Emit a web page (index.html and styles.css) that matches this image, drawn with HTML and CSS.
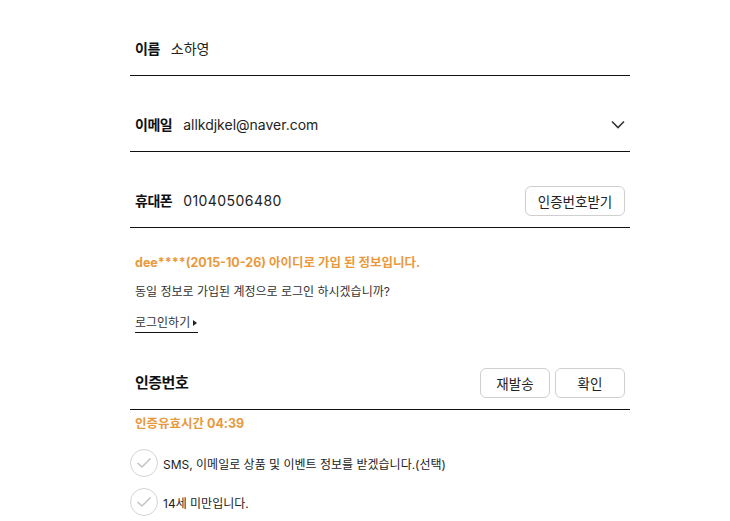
FILE: index.html
```html
<!DOCTYPE html>
<html lang="ko">
<head>
<meta charset="utf-8">
<link rel="stylesheet" href="styles.css">
</head>
<body>
<main class="form">
  <div class="row">
    <span class="label">이름</span>
    <span class="value">소하영</span>
  </div>
  <div class="row">
    <span class="label">이메일</span>
    <span class="value">allkdjkel@naver.com</span>
    <svg class="chev" width="14" height="9" viewBox="0 0 14 9"><path d="M1 1.5 L7 7.5 L13 1.5" fill="none" stroke="#333" stroke-width="1.6"/></svg>
  </div>
  <div class="row">
    <span class="label">휴대폰</span>
    <span class="value num">01040506480</span>
    <button class="btn btn-wide">인증번호받기</button>
  </div>
  <div class="info">
    <p class="warn">dee****(2015-10-26) 아이디로 가입 된 정보입니다.</p>
    <p class="ask">동일 정보로 가입된 계정으로 로그인 하시겠습니까?</p>
    <a class="login">로그인하기<span class="tri"></span></a>
  </div>
  <div class="row">
    <span class="label big">인증번호</span>
    <div class="btns">
      <button class="btn btn-mid">재발송</button>
      <button class="btn btn-mid">확인</button>
    </div>
  </div>
  <p class="timer">인증유효시간 04:39</p>
  <ul class="checks">
    <li><span class="circle"><svg width="16" height="12" viewBox="0 0 16 12"><path d="M1.5 6 L6 10 L14.5 1.5" fill="none" stroke="#c4c4c4" stroke-width="1.6"/></svg></span>SMS, 이메일로 상품 및 이벤트 정보를 받겠습니다.(선택)</li>
    <li><span class="circle"><svg width="16" height="12" viewBox="0 0 16 12"><path d="M1.5 6 L6 10 L14.5 1.5" fill="none" stroke="#c4c4c4" stroke-width="1.6"/></svg></span>14세 미만입니다.</li>
  </ul>
</main>
</body>
</html>
```
FILE: styles.css
```css
* { box-sizing: border-box; }
html, body { margin: 0; padding: 0; background: #fff; }
body {
  font-family: Inter, "Noto Sans CJK KR", sans-serif;
  color: #222;
}
.form {
  width: 500px;
  margin-left: 130px;
}
.row {
  height: 76px;
  border-bottom: 1px solid #111;
  display: flex;
  align-items: flex-end;
  padding: 0 5px 11px 5px;
}
.row > .label, .row > .value { line-height: 30px; }
.label {
  font-weight: 700;
  font-size: 14px;
  color: #111;
  letter-spacing: -0.5px;
  margin-right: 11px;
}
.label.big { font-size: 15px; }
.value {
  font-size: 14px;
  color: #222;
}
.value.num { letter-spacing: 0.45px; }
.chev { margin-left: auto; align-self: flex-end; margin-bottom: 11px; }
.btn {
  height: 30px;
  background: #fff;
  border: 1px solid #cfcfcf;
  border-radius: 6px;
  font-family: "Noto Sans CJK KR", sans-serif;
  font-size: 13.5px;
  color: #222;
  padding: 0;
}
.btn-wide { width: 100px; margin-left: auto; }
.btns { margin-left: auto; display: flex; gap: 5px; }
.btn-mid { width: 70px; }
.info { padding: 25px 5px 0 5px; height: 106px; }
.info p { margin: 0; }
.warn {
  font-size: 12.5px;
  font-weight: 700;
  line-height: 20px;
  color: #e9993c;
}
.ask {
  font-size: 12px;
  line-height: 20px;
  margin-top: 9px !important;
  color: #333;
}
.login {
  display: inline-flex;
  align-items: center;
  margin-top: 12px;
  font-size: 12px;
  line-height: 18px;
  color: #333;
  border-bottom: 1px solid #111;
  padding-right: 1px;
}
.tri {
  display: inline-block;
  width: 0; height: 0;
  border-left: 4px solid #222;
  border-top: 3.5px solid transparent;
  border-bottom: 3.5px solid transparent;
  margin-left: 3px;
}
.timer {
  margin: 4px 0 0 0;
  padding-left: 5px;
  font-size: 12.5px;
  font-weight: 700;
  line-height: 20px;
  color: #e9993c;
}
.checks { list-style: none; margin: 15px 0 0 0; padding: 0; }
.checks li {
  display: flex;
  align-items: center;
  height: 28px;
  font-size: 12px;
  color: #222;
  margin-bottom: 11px;
}
.circle {
  width: 28px; height: 28px;
  border: 1px solid #d4d4d4;
  border-radius: 50%;
  display: flex;
  align-items: center;
  justify-content: center;
  margin-right: 5px;
}
```
